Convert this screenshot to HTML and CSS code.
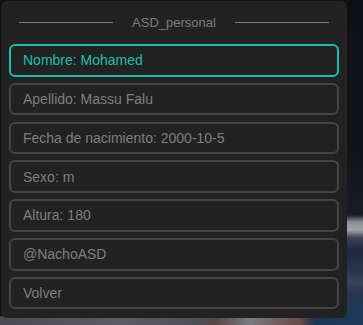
FILE: index.html
```html
<!DOCTYPE html>
<html lang="es">
<head>
  <meta charset="UTF-8">
  <title>ASD_personal</title>
  <link rel="stylesheet" href="styles.css">
</head>
<body>

  <div class="panel">
    <div class="titulo">
      <span class="linea"></span>
      <span class="titulo-texto">ASD_personal</span>
      <span class="linea"></span>
    </div>

    <div class="opciones">
      <button class="opcion activa">Nombre: Mohamed</button>
      <button class="opcion">Apellido: Massu Falu</button>
      <button class="opcion">Fecha de nacimiento: 2000-10-5</button>
      <button class="opcion">Sexo: m</button>
      <button class="opcion">Altura: 180</button>
      <button class="opcion">@NachoASD</button>
      <button class="opcion">Volver</button>
    </div>
  </div>

</body>
</html>
```

FILE: styles.css
```css
html, body {
  height: 100%;
}
body {
  margin: 0;
  overflow: hidden;
  font-family: "Liberation Sans", Arial, sans-serif;
  background:
    linear-gradient(to bottom, #0f1015 0, #12131a 150px, #1a1b25 215px, #8e8e96 222px, #a2a2aa 230px, #3a4055 238px, #1f2740 250px, #27334c 270px, #3a4358 282px, #24344f 295px, #1c3a5c 325px) right top / 18px 100% no-repeat,
    linear-gradient(to right, #4a4a50 0, #5c5c62 120px, #4e4e55 200px, #5a4542 215px, #7a7a80 250px, #6a4a45 300px, #1c3555 315px, #1d3a5c 363px) left bottom / 100% 9px no-repeat,
    #101116;
}
.panel {
  box-sizing: border-box;
  width: 346px;
  height: 317px;
  margin: 1px 0 0 1px;
  padding: 14px 8px 8px;
  background: #222222;
  border-radius: 6px;
}
.titulo {
  display: flex;
  align-items: center;
  gap: 19px;
  margin: 0 10px 14px;
  height: 15px;
}
.linea {
  flex: 1;
  height: 1px;
  background: #7a7a7a;
}
.titulo-texto {
  font-size: 13px;
  line-height: 15px;
  color: #7c7c7c;
}
.opciones {
  display: flex;
  flex-direction: column;
  gap: 6.1px;
}
.opcion {
  box-sizing: border-box;
  height: 32.7px;
  padding: 0 12px;
  display: flex;
  align-items: center;
  background: #222222;
  border: 2px solid #454545;
  border-radius: 6px;
  font-family: inherit;
  font-size: 14px;
  color: #7f7f7f;
  text-align: left;
  cursor: pointer;
}
.opcion.activa {
  border-color: #17bfae;
  color: #17bfae;
}
```
